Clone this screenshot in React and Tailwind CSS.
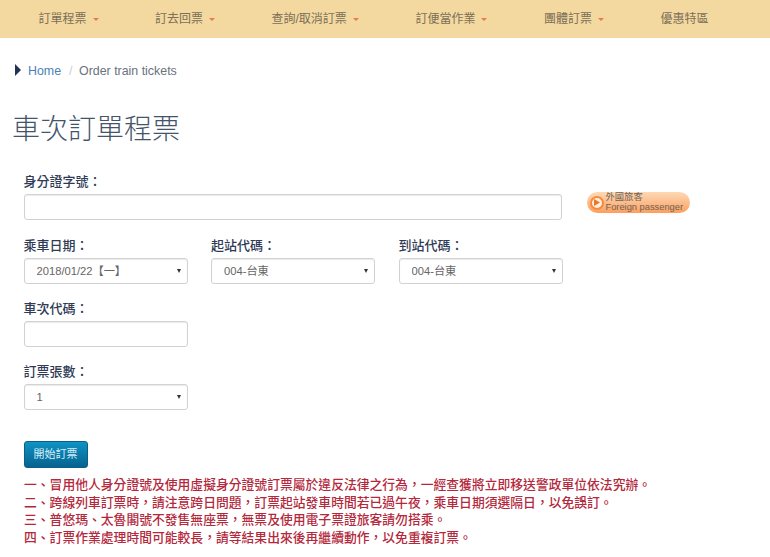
import React from "react"

const CJK = "font-['Liberation_Sans','Noto_Sans_CJK_TC',sans-serif]"

const navItems = [
  { label: "訂單程票", caret: true },
  { label: "訂去回票", caret: true },
  { label: "查詢/取消訂票", caret: true },
  { label: "訂便當作業", caret: true },
  { label: "團體訂票", caret: true },
  { label: "優惠特區", caret: false },
]

const notices = [
  "一、冒用他人身分證號及使用虛擬身分證號訂票屬於違反法律之行為，一經查獲將立即移送警政單位依法究辦。",
  "二、跨線列車訂票時，請注意跨日問題，訂票起站發車時間若已過午夜，乘車日期須選隔日，以免誤訂。",
  "三、普悠瑪、太魯閣號不發售無座票，無票及使用電子票證旅客請勿搭乘。",
  "四、訂票作業處理時間可能較長，請等結果出來後再繼續動作，以免重複訂票。",
]

// Small label above each field
const Label = ({ children }) => (
  <label className="block text-[13px] leading-[18px] font-medium text-[#2f3b55] mb-[3px]">
    {children}
  </label>
)

const Select = ({ value }) => (
  <div className="relative">
    <select
      defaultValue={value}
      className="block w-full h-[26px] appearance-none pl-[12px] pr-[16px] text-[11.2px] text-[#666] bg-white border border-[#d2d2d2] rounded-[3px] shadow-[inset_0_1px_1px_rgba(0,0,0,0.08)]"
    >
      <option>{value}</option>
    </select>
    {/* native arrow in the reference is a tiny solid triangle */}
    <span className="absolute right-[7px] top-[11px] w-0 h-0 border-x-[2.5px] border-x-transparent border-t-[4px] border-t-[#333]" />
  </div>
)

const TextInput = ({ className }) => (
  <input
    type="text"
    className={`block h-[26px] bg-white border border-[#d2d2d2] rounded-[3px] shadow-[inset_0_1px_1px_rgba(0,0,0,0.08)] ${className}`}
  />
)

export default function App() {
  return (
    <div className={`w-[770px] h-[557px] overflow-hidden bg-white ${CJK}`}>
      {/* Top nav */}
      <nav className="h-[38px] bg-[#f3d99f] flex items-center pl-[38.5px] gap-[56.5px]">
        {navItems.map((item) => (
          <div key={item.label} className="flex items-center text-[12px] text-[#7b6f58]">
            <span>{item.label}</span>
            {item.caret && (
              <span className="ml-[6px] w-0 h-0 border-x-[3px] border-x-transparent border-t-[3px] border-t-[#ea7a4a]" />
            )}
          </div>
        ))}
      </nav>

      {/* Breadcrumb */}
      <div className="flex items-center h-[20px] mt-[23px] pl-[15px] text-[12.4px]">
        <span className="w-0 h-0 border-y-[6px] border-y-transparent border-l-[6px] border-l-[#1f3352] mb-[2px]" />
        <span className="ml-[7px] text-[#4a7fb8]">Home</span>
        <span className="ml-[8px] text-[#ccc]">/</span>
        <span className="ml-[6.5px] text-[#6b7280]">Order train tickets</span>
      </div>

      <h1 className="mt-[29px] pl-[12px] text-[28px] leading-[40px] font-light text-[#44546a]">
        車次訂單程票
      </h1>

      {/* Form */}
      <div className="mt-[23px] pl-[23.5px]">
        <div className="flex items-end">
          <div>
            <Label>身分證字號：</Label>
            <TextInput className="w-[538px]" />
          </div>
          <div className="ml-[25px] mb-[7px] w-[103px] h-[21px] flex items-center rounded-full bg-gradient-to-b from-[#fdd9b5] to-[#fb9f5e] pl-[3px]">
            <span className="w-[14px] h-[14px] rounded-full border-[2px] border-[#f58a3c] bg-[#fff1e0] flex items-center justify-center shrink-0">
              <svg width="6" height="7" viewBox="0 0 6 7">
                <path d="M0 0 L6 3.5 L0 7 Z" fill="#f0751f" />
              </svg>
            </span>
            <span className="ml-[2px] text-[9.3px] leading-[9.5px] text-[#6f6255] whitespace-nowrap">
              <span className="block">外國旅客</span>
              <span className="block">Foreign passenger</span>
            </span>
          </div>
        </div>

        <div className="mt-[17px] grid grid-cols-[164px_164px_164px] gap-x-[23.5px] w-[538px]">
          <div>
            <Label>乘車日期：</Label>
            <Select value="2018/01/22【一】" />
          </div>
          <div>
            <Label>起站代碼：</Label>
            <Select value="004-台東" />
          </div>
          <div>
            <Label>到站代碼：</Label>
            <Select value="004-台東" />
          </div>
        </div>

        <div className="mt-[16px] w-[164px]">
          <Label>車次代碼：</Label>
          <TextInput className="w-full" />
        </div>

        <div className="mt-[16px] w-[164px]">
          <Label>訂票張數：</Label>
          <Select value="1" />
        </div>

        <button className="mt-[31px] block w-[64px] h-[27px] rounded-[3px] border border-[#0a5f88] bg-gradient-to-b from-[#0f93c4] to-[#06638f] text-[11px] text-[#d7eef8]">
          開始訂票
        </button>

        <div className="mt-[8px] pl-[0.5px] text-[12.8px] leading-[17.7px] font-medium text-[#b4283c] whitespace-nowrap">
          {notices.map((line) => (
            <p key={line}>{line}</p>
          ))}
        </div>
      </div>
    </div>
  )
}
